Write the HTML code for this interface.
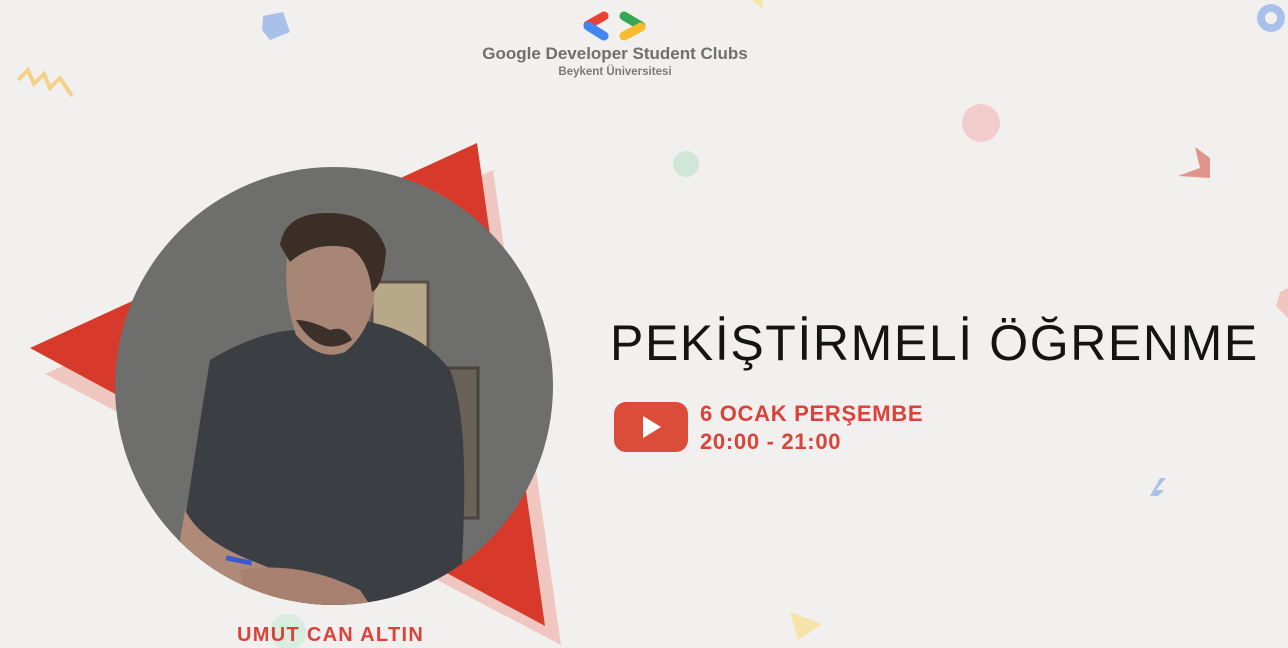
<!DOCTYPE html>
<html><head><meta charset="utf-8"><style>
html,body{margin:0;padding:0}
body{width:1288px;height:648px;overflow:hidden;background:#f1f0ee;position:relative;font-family:"Liberation Sans","DejaVu Sans",sans-serif}
.abs{position:absolute}
</style></head><body>
<svg class="abs" style="left:0;top:0" width="1288" height="648" viewBox="0 0 1288 648">
  <polygon points="263,16 283,12 290,32 270,40 262,30" fill="#a9c1ea"/>
  <polyline points="18,80 28,70 34,84 44,74 50,88 60,78 72,96" fill="none" stroke="#f3d18a" stroke-width="4"/>
  <polygon points="752,0 762,0 764,10" fill="#f6e3a8"/>
  <circle cx="1271" cy="18" r="14" fill="#a9c1ea"/><circle cx="1271" cy="18" r="6" fill="#f1f0ee"/>
  <circle cx="981" cy="123" r="19" fill="#f2cccb"/>
  <circle cx="686" cy="164" r="13" fill="#cfe6d8"/>
  <polygon points="1195,147 1210,158 1210,178 1178,176 1200,168" fill="#e0958c"/>
  <polygon points="1280,292 1288,288 1288,318 1276,306" fill="#f1c4c0"/>
  <polygon points="1160,478 1150,496 1158,496 1146,508 1164,490 1156,490 1166,478" fill="#a9c1ea"/>
  <polygon points="790,612 822,624 798,640" fill="#f6e3a8"/>
  <circle cx="288" cy="632" r="18" fill="#d8ece0"/>
  <polygon points="45,374 493,170 561,645" fill="#f0c6c1"/>
  <polygon points="30,348 477,143 545,626" fill="#d73a2a"/>
  <defs><clipPath id="c"><circle cx="334" cy="386" r="219"/></clipPath></defs>
  <circle cx="334" cy="386" r="219" fill="#6e6e6c"/>
  <g clip-path="url(#c)">
    <rect x="372" y="282" width="56" height="66" fill="#b8a88a" stroke="#5a5048" stroke-width="3"/>
    <rect x="440" y="368" width="38" height="150" fill="#6a6258" stroke="#4a443e" stroke-width="3"/>
    <path d="M210,360 Q260,330 300,330 L360,320 Q420,330 450,370 Q470,420 462,560 L470,620 L190,620 L185,520 Q200,420 210,360Z" fill="#3b3e42"/>
    <path d="M185,510 Q200,540 250,560 L300,580 L340,600 L260,605 Q200,580 180,540Z" fill="#b08a78"/>
    <path d="M240,570 Q300,560 360,590 L380,620 L250,620Z" fill="#a88070"/>
    <rect x="226" y="558" width="26" height="5" fill="#3a5bd0" transform="rotate(12 239 560)"/>
    <path d="M288,250 Q282,295 296,335 Q320,362 345,352 Q372,330 375,290 Q378,250 350,240 Q310,235 288,250Z" fill="#a88676"/>
    <path d="M280,245 Q285,212 330,213 Q375,214 386,250 Q384,285 372,292 Q368,258 350,248 Q315,240 290,262Z" fill="#3a2e26"/>
    <path d="M296,320 Q320,360 352,340 Q345,325 330,330 Q310,320 296,320Z" fill="#3c302a"/>
  </g>
</svg>

<svg class="abs" style="left:580px;top:9px" width="70" height="34" viewBox="0 0 70 34">
  <line x1="24" y1="7" x2="8" y2="16" stroke="#e84235" stroke-width="9" stroke-linecap="round"/>
  <line x1="8" y1="17" x2="24" y2="27" stroke="#4286f5" stroke-width="9" stroke-linecap="round"/>
  <line x1="44" y1="7" x2="61" y2="17" stroke="#34a853" stroke-width="9" stroke-linecap="round"/>
  <line x1="61" y1="18" x2="44" y2="27" stroke="#f9bb2d" stroke-width="9" stroke-linecap="round"/>
</svg>
<div class="abs" style="left:465px;top:44px;width:300px;text-align:center;color:#6f6f6f;font-size:17px;font-weight:bold">Google Developer Student Clubs</div>
<div class="abs" style="left:465px;top:66px;width:300px;text-align:center;color:#7a7a7a;font-size:11.5px;font-weight:bold">Beykent Üniversitesi</div>

<div class="abs" style="left:610px;top:311px;color:#141414;font-size:50px;letter-spacing:1.6px;white-space:nowrap;line-height:64px">PEKİŞTİRMELİ ÖĞRENME</div>

<svg class="abs" style="left:614px;top:402px" width="74" height="50" viewBox="0 0 74 50">
  <rect x="0" y="0" width="74" height="50" rx="12" fill="#dc4c3b"/>
  <polygon points="29,14 29,36 47,25" fill="#fff"/>
</svg>
<div class="abs" style="left:700px;top:400px;color:#d9443a;font-size:22px;font-weight:bold;line-height:28px;letter-spacing:0.7px;white-space:nowrap">6 OCAK PERŞEMBE<br>20:00 - 21:00</div>

<div class="abs" style="left:237px;top:624px;color:#d9443a;font-size:20px;font-weight:bold;letter-spacing:1.3px;white-space:nowrap">UMUT CAN ALTIN</div>
</body></html>
